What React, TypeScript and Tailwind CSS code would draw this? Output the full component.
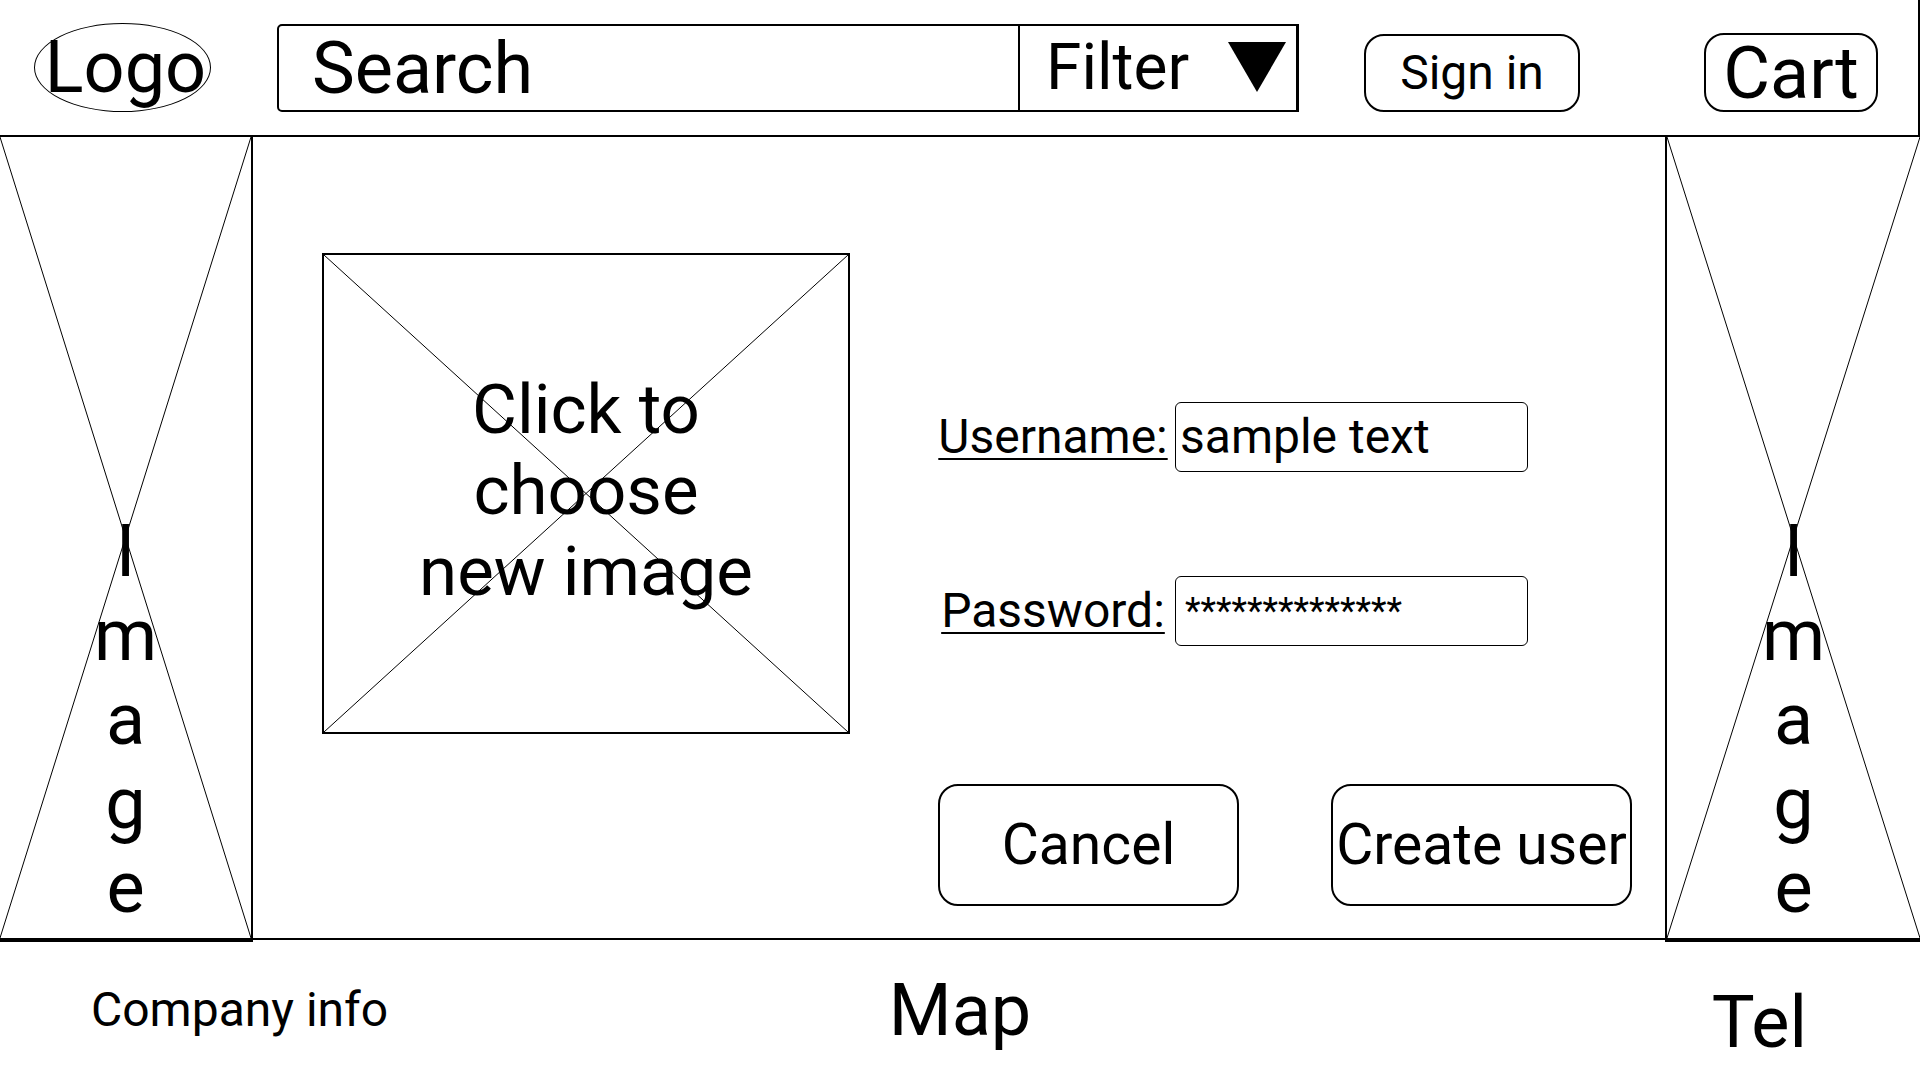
import React from "react";

function Cross() {
  return (
    <svg
      className="absolute inset-0 h-full w-full"
      viewBox="0 0 100 100"
      preserveAspectRatio="none"
      aria-hidden="true"
    >
      <path
        d="M0 0 L100 100 M100 0 L0 100"
        stroke="black"
        strokeWidth="1"
        fill="none"
        vectorEffect="non-scaling-stroke"
      />
    </svg>
  );
}

function ImageRail({ className }: { className: string }) {
  return (
    <aside
      className={`relative flex flex-col items-center justify-end border-b-4 border-black pb-2 text-[72px] leading-[84px] ${className}`}
    >
      <Cross />
      {["I", "m", "a", "g", "e"].map((letter) => (
        <span key={letter} className="relative">
          {letter}
        </span>
      ))}
    </aside>
  );
}

function Header() {
  return (
    <header className="flex items-end border-r-2 border-b-2 border-black pt-[23px] pr-10 pb-[23px] pl-[34px]">
      <a
        href="#home"
        className="flex h-[89px] w-[177px] shrink-0 items-center justify-center rounded-[50%] border border-black pl-1.5 text-[72px] leading-[84px]"
      >
        Logo
      </a>
      <form
        role="search"
        className="ml-[66px] flex h-[88px] min-w-0 flex-1 rounded-l-[5px] border-2 border-r-[3px] border-black"
      >
        <input
          type="search"
          aria-label="Search"
          placeholder="Search"
          className="h-full min-w-0 flex-1 appearance-none bg-transparent pl-[33px] text-[72px] leading-[84px] outline-none placeholder:text-black placeholder:opacity-100"
        />
        <div className="relative w-[278px] shrink-0 border-l-2 border-black">
          <select
            aria-label="Filter"
            className="h-full w-full appearance-none bg-transparent pl-[26px] text-[64px] leading-[76px] outline-none"
          >
            <option>Filter</option>
          </select>
          <svg
            className="pointer-events-none absolute top-4 right-2.5 h-[50px] w-[58px]"
            viewBox="0 0 58 50"
            aria-hidden="true"
          >
            <path d="M0 0H58L29 50Z" fill="black" />
          </svg>
        </div>
      </form>
      <button
        type="button"
        className="ml-[65px] h-[78px] w-[216px] shrink-0 rounded-[20px] border-2 border-black text-5xl"
      >
        Sign in
      </button>
      <button
        type="button"
        className="ml-[124px] h-[79px] w-[174px] shrink-0 rounded-[20px] border-2 border-black pt-0.5 text-[72px] leading-[72px]"
      >
        Cart
      </button>
    </header>
  );
}

function UserForm() {
  return (
    <form className="flex min-w-0 flex-1 flex-col justify-end">
      <div className="grid grid-cols-[230px_353px] items-center gap-x-[7px] gap-y-[104px]">
        <label
          htmlFor="username"
          className="text-center text-5xl leading-[56px] underline decoration-2 underline-offset-[5px]"
        >
          Username:
        </label>
        <input
          id="username"
          type="text"
          defaultValue="sample text"
          className="h-[70px] rounded-md border border-black bg-transparent pb-0.5 pl-1 text-5xl leading-[56px] outline-none"
        />
        <label
          htmlFor="password"
          className="text-center text-5xl leading-[56px] underline decoration-2 underline-offset-[5px]"
        >
          Password:
        </label>
        <input
          id="password"
          type="text"
          autoComplete="off"
          defaultValue="**************"
          className="h-[70px] rounded-md border border-black bg-transparent pl-[9px] text-4xl leading-[42px] outline-none"
        />
      </div>
      <div className="mt-[138px] flex justify-between">
        <button
          type="button"
          className="h-[122px] w-[301px] rounded-[20px] border-2 border-black text-[57px] leading-[66px] whitespace-nowrap"
        >
          Cancel
        </button>
        <button
          type="submit"
          className="flex h-[122px] w-[301px] items-center justify-center rounded-[20px] border-2 border-black text-[57px] leading-[66px] whitespace-nowrap"
        >
          Create user
        </button>
      </div>
    </form>
  );
}

export default function App() {
  return (
    <div className="flex min-h-screen flex-col bg-white font-['Roboto',sans-serif] text-black">
      <Header />
      <div className="grid flex-1 grid-cols-[253px_1fr_255px]">
        <ImageRail className="border-r-2" />
        <main className="mb-0.5 flex gap-[88px] border-b-2 border-black pt-[116px] pr-[33px] pb-8 pl-[69px]">
          <button
            type="button"
            className="relative flex h-[481px] w-[528px] items-center justify-center border-2 border-black pb-1.5 text-[69px] leading-[81px]"
          >
            <Cross />
            <span className="relative">
              Click to
              <br />
              choose
              <br />
              new image
            </span>
          </button>
          <UserForm />
        </main>
        <ImageRail className="border-l-2" />
      </div>
      <footer className="grid h-[138px] grid-cols-3 items-center">
        <p className="pb-0.5 pl-[91px] text-5xl leading-[56px]">Company info</p>
        <p className="text-center text-[72px] leading-[84px]">Map</p>
        <p className="pt-6 pr-[113px] text-right text-[72px] leading-[84px]">
          Tel
        </p>
      </footer>
    </div>
  );
}
